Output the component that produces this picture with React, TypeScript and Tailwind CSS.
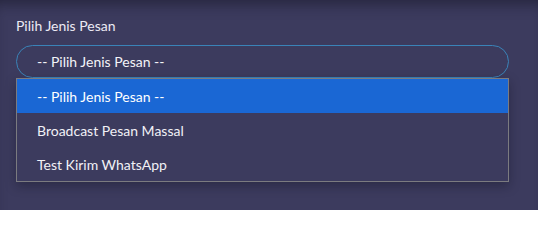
const options = [
    "-- Pilih Jenis Pesan --",
    "Broadcast Pesan Massal",
    "Test Kirim WhatsApp",
];

export default function App() {
    const selected = 0;

    return (
        <div
            className="h-[210px] w-[538px] overflow-hidden bg-[#3c3b5e] shadow-[inset_0_12px_14px_-8px_rgba(20,20,35,0.55)]"
            style={{ fontFamily: "Lato, 'Noto Sans', sans-serif" }}
        >
            <div className="px-4 pt-[17px]">
                {/* Label */}
                <label className="block text-[14px] leading-[18px] text-[#eceaf4]">
                    Pilih Jenis Pesan
                </label>

                {/* Select */}
                <div className="mt-[10px] flex h-[33px] w-[493px] items-center rounded-full border border-[#3a83b8] pl-[20px] text-[14px] text-[#f3f3f8]">
                    {options[selected]}
                </div>

                {/* Open list */}
                <ul className="w-[493px] border border-[#7b7b80] bg-[#3c3b5e] shadow-[0_4px_10px_rgba(15,15,30,0.35)]">
                    {options.map((opt, i) => (
                        <li
                            key={opt}
                            className={`flex h-[34px] items-center pl-[20px] text-[14px] ${i === selected
                                    ? "bg-[#1a67d4] text-white"
                                    : "text-[#f1f1f6]"
                                }`}
                        >
                            {opt}
                        </li>
                    ))}
                </ul>
            </div>
        </div>
    );
}
